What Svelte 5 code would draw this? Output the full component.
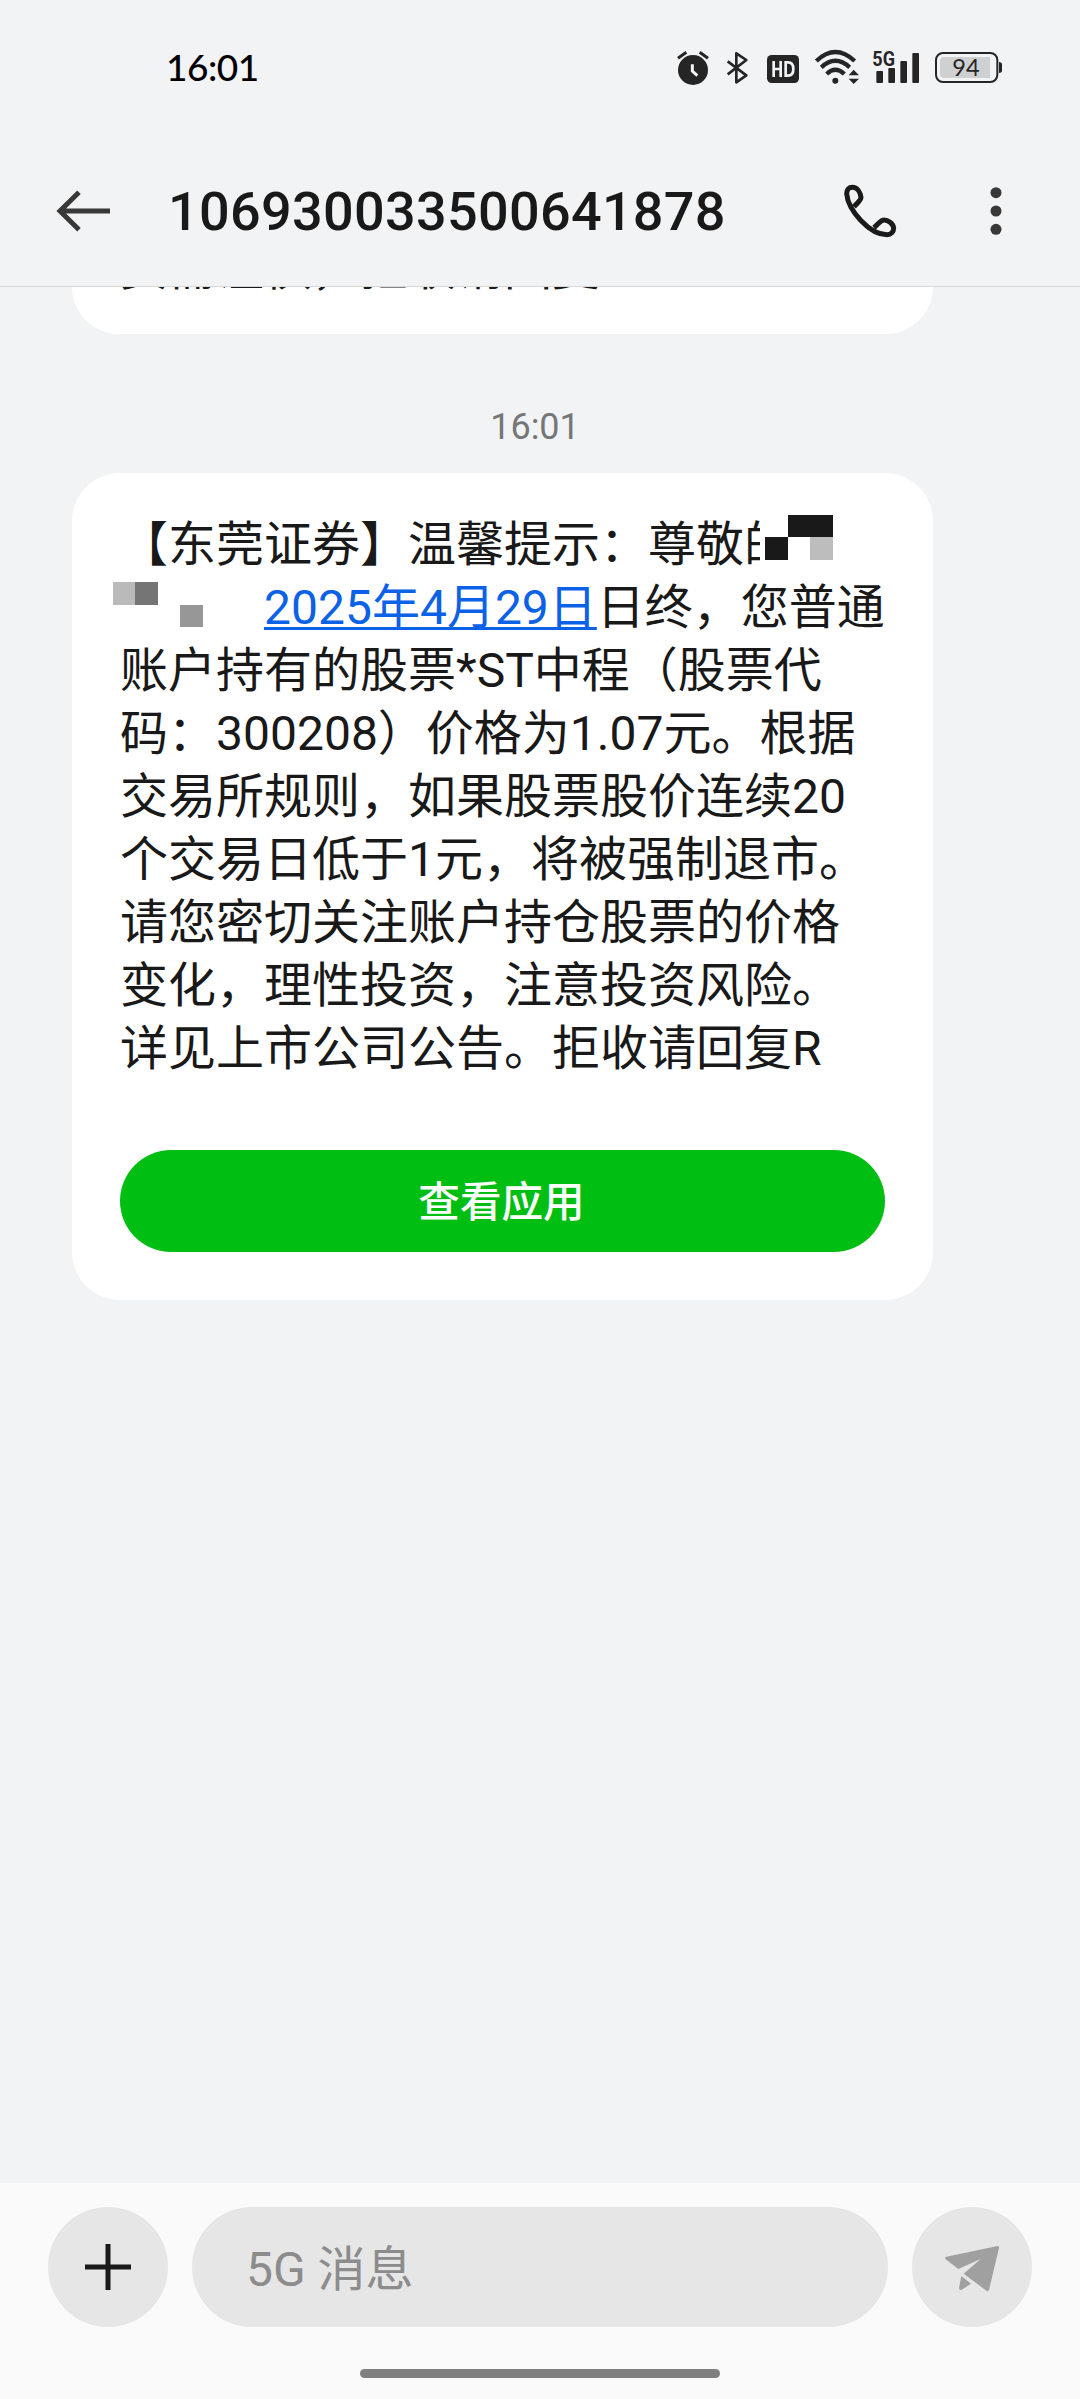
<script>
  const previousLine = '资需谨慎，拒收请回复';
  const lines = [
    '账户持有的股票*ST中程（股票代',
    '码：300208）价格为1.07元。根据',
    '交易所规则，如果股票股价连续20',
    '个交易日低于1元，将被强制退市。',
    '请您密切关注账户持仓股票的价格',
    '变化，理性投资，注意投资风险。',
    '详见上市公司公告。拒收请回复R',
  ];
</script>

<div class="screen">
  <header>
    <div class="status">
      <span class="clock">16:01</span>
      <div class="indicators">
        <svg width="36" height="40" viewBox="48 54 108 120">
          <circle cx="99" cy="120" r="45" fill="#252525" />
          <path d="M54 85 79 67M144 85 119 67" stroke="#252525" stroke-width="9" fill="none" />
          <path d="M97 103v20l15 14" stroke="#f2f3f5" stroke-width="9" fill="none" />
        </svg>
        <svg width="26" height="40" viewBox="198 54 78 120">
          <path d="M203 94 259 136 229 157V70L259 90 203 133" stroke="#252525" stroke-width="8" fill="none" stroke-linejoin="round" />
        </svg>
        <svg width="34" height="40" viewBox="318 54 102 120">
          <rect x="321" y="75" width="96" height="84" rx="14" fill="#252525" />
          <path d="M341 93v48M362 93v48M341 117h21M377 97v40h7q16 0 16-20t-16-20z" stroke="#f2f3f5" stroke-width="8" fill="none" />
        </svg>
        <svg class="wifi" width="44" height="40" viewBox="462 54 132 120">
          <g stroke="#252525" stroke-width="13" fill="none">
            <path d="M469 93q57-54 115 0" />
            <path d="M484 112q42-39 85 0" />
            <path d="M500 132q26-25 53 0" />
          </g>
          <circle cx="526" cy="152" r="9" fill="#252525" />
          <path d="M566 136 581 119 597 136zM566 146 581 162 597 146z" fill="#252525" />
        </svg>
        <svg width="48" height="40" viewBox="636 54 144 120">
          <text x="637" y="108" class="net" textLength="68" lengthAdjust="spacingAndGlyphs">5G</text>
          <g fill="#252525">
            <rect x="649" y="123" width="20" height="36" rx="3" />
            <rect x="685" y="114" width="20" height="45" rx="3" />
            <rect x="721" y="93" width="20" height="66" rx="3" />
            <rect x="757" y="69" width="20" height="90" rx="3" />
          </g>
        </svg>
        <svg width="69" height="40" viewBox="822 54 207 120">
          <rect x="828" y="69" width="184" height="87" rx="21" fill="none" stroke="#252525" stroke-width="6" />
          <path d="M852 81H990V144H852Q840 144 840 132V93Q840 81 852 81z" fill="#cfd0d2" />
          <path d="M1017 96q9 1 9 7v19q0 6-9 7z" fill="#252525" />
          <text x="877" y="137" class="charge" textLength="82" lengthAdjust="spacingAndGlyphs">94</text>
        </svg>
      </div>
    </div>
    <div class="titlebar">
      <svg width="60" height="60" viewBox="72 453 180 180">
        <path d="M240 543H90M147 487 90 543 147 599" stroke="#383838" stroke-width="15" fill="none" />
      </svg>
      <h1>106930033500641878</h1>
      <svg width="60" height="60" viewBox="300 123 180 180">
        <path d="M342 200C357 184 363 181 363 172C361 157 352 142 337 142C327 142 320 149 320 161C324 211 389 284 441 284C453 284 461 276 461 264C459 249 444 240 432 240C422 240 419 248 402 263" stroke="#1a1a1a" stroke-width="15" fill="none" stroke-linejoin="round" />
      </svg>
      <svg class="more" width="60" height="60" viewBox="678 123 180 180">
        <g fill="#383838"><circle cx="768" cy="158" r="16.5" /><circle cx="768" cy="213" r="16.5" /><circle cx="768" cy="268" r="16.5" /></g>
      </svg>
    </div>
  </header>

  <main>
    <div class="bubble previous"><p>{previousLine}</p></div>
    <time>16:01</time>
    <div class="bubble">
      <p class="first">
        <span>【东莞证券】温馨提示：尊敬</span><span class="cut">的</span>
        <svg class="mask-name" width="68" height="45" viewBox="0 0 68 45" shape-rendering="crispEdges">
          <path d="M23 0H68V22H23zM0 22H23V45H0z" fill="#191919" />
          <path d="M45 22H68V45H45z" fill="#bdbdbd" />
        </svg>
      </p>
      <p class="second">
        <svg class="mask-title" width="90" height="47" viewBox="0 0 90 47" shape-rendering="crispEdges">
          <path d="M0 0H22V23H0z" fill="#bababa" />
          <path d="M22 0H45V23H22z" fill="#757575" />
          <path d="M67 23H90V45H67z" fill="#979797" />
        </svg>
        <span class="link">2025年4月29日</span><span>日终，您普通</span>
      </p>
      {#each lines as line}
        <p>{line}</p>
      {/each}
      <button>查看应用</button>
    </div>
  </main>

  <footer>
    <div class="composer">
      <div class="round">
        <svg width="120" height="120" viewBox="0 0 120 120">
          <path d="M37 60H83M60 37V83" stroke="#191919" stroke-width="5" />
        </svg>
      </div>
      <div class="field">5G 消息</div>
      <div class="round">
        <svg width="120" height="120" viewBox="396 141 360 360">
          <g fill="#a0a0a0">
            <path d="M499 290 653 258Q658 258 657 264L627 390Q625 395 619 392L551 341 602 297 535 327 497 298Q493 292 499 290z" />
            <path d="M544 348 573 371 544 390Q537 391 537 384z" />
          </g>
        </svg>
      </div>
    </div>
    <div class="home"></div>
  </footer>
</div>

<style>
  :global(body) { background: #f2f3f5; }
  .screen {
    width: 1080px;
    height: 2399px;
    display: flex;
    flex-direction: column;
    overflow: hidden;
    background: #f2f3f5;
    color: #191919;
    font-family: Roboto, "Noto Sans CJK SC", sans-serif;
  }
  svg { display: block; flex: none; }
  header {
    box-sizing: border-box;
    height: 287px;
    flex: none;
    border-bottom: 1px solid #d6d8da;
  }
  .status {
    box-sizing: border-box;
    height: 136px;
    padding: 0 77px 0 166px;
    display: flex;
    align-items: center;
    justify-content: space-between;
  }
  .clock {
    padding-bottom: 2px;
    color: #000;
    font: 500 37px/40px Lato, sans-serif;
    letter-spacing: -0.5px;
  }
  .indicators { display: flex; gap: 14px; }
  .wifi { overflow: visible; }
  .net { font: 700 60px Roboto, sans-serif; fill: #252525; }
  .charge { font: 400 72px Lato, sans-serif; fill: #252525; }
  .titlebar {
    height: 150px;
    padding: 0 54px;
    display: flex;
    align-items: center;
  }
  h1 {
    width: 672px;
    margin: 0 0 0 54px;
    padding-top: 2px;
    font-size: 54px;
    font-weight: 500;
    line-height: 64px;
    letter-spacing: 0.3px;
  }
  .more { margin-left: 66px; }
  main {
    flex: 1;
    min-height: 0;
    display: flex;
    flex-direction: column;
    align-items: flex-start;
    overflow: hidden;
  }
  .bubble {
    box-sizing: border-box;
    width: 861px;
    margin-left: 72px;
    padding: 40px 48px 48px;
    border-radius: 48px;
    background: #fff;
  }
  .previous {
    height: 47px;
    padding: 0 48px;
    display: flex;
    flex: none;
    align-items: flex-end;
    border-radius: 0 0 48px 48px;
    overflow: hidden;
  }
  .previous p { margin-bottom: 34px; }
  p {
    display: flex;
    height: 63px;
    margin: 0;
    font-size: 48px;
    line-height: 63px;
    white-space: pre;
  }
  .cut { width: 16px; overflow: hidden; }
  .mask-name { margin: 2px 0 0 5px; }
  .mask-title { margin: 6px 61px 0 -7px; }
  .link {
    color: #0b62e6;
    text-decoration: underline;
    text-decoration-thickness: 3px;
    text-underline-offset: 3px;
  }
  time {
    width: 1070px;
    margin: 72px 0 25px;
    text-align: center;
    color: #757678;
    font-size: 36px;
    line-height: 42px;
  }
  button {
    display: block;
    width: 765px;
    height: 102px;
    margin-top: 70px;
    padding: 4px 2px 0 0;
    border: 0;
    border-radius: 51px;
    background: #00be12;
    color: #fff;
    font: 500 41.6px/98px Roboto, "Noto Sans CJK SC", sans-serif;
  }
  footer {
    box-sizing: border-box;
    height: 216px;
    flex: none;
    padding: 24px 48px 0;
    background: #fafafa;
  }
  .composer { display: flex; gap: 24px; }
  .round {
    width: 120px;
    height: 120px;
    border-radius: 50%;
    background: #e6e6e6;
  }
  .field {
    box-sizing: border-box;
    height: 120px;
    flex: 1;
    padding: 5px 0 0 54px;
    border-radius: 60px;
    background: #e6e6e6;
    color: #8c8c8c;
    font-size: 48px;
    line-height: 115px;
  }
  .home {
    width: 360px;
    height: 9px;
    margin: 42px auto 0;
    border-radius: 5px;
    background: #7f7f7f;
  }
</style>
